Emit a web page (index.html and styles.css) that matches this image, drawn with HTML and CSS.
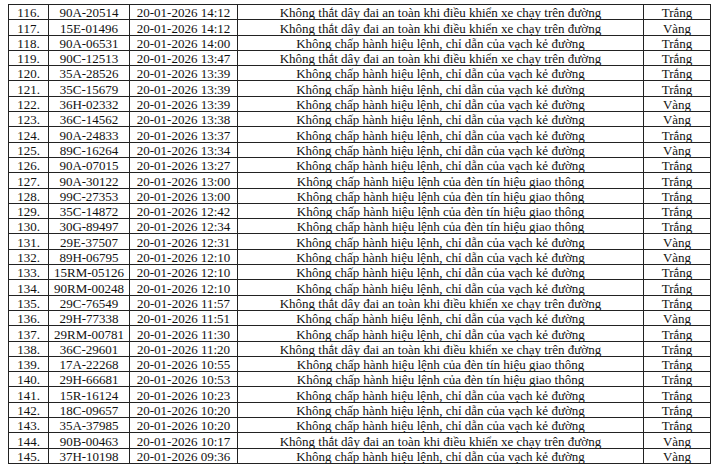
FILE: index.html
```html
<!DOCTYPE html>
<html lang="vi">
<head>
<meta charset="utf-8">
<link rel="stylesheet" href="styles.css">
</head>
<body>
<table class="list">
<colgroup><col class="c-no"><col class="c-plate"><col class="c-time"><col class="c-desc"><col class="c-color"></colgroup>
<tbody>
<tr><td>116.</td><td>90A-20514</td><td>20-01-2026 14:12</td><td>Không thắt dây đai an toàn khi điều khiển xe chạy trên đường</td><td>Trắng</td></tr>
<tr><td>117.</td><td>15E-01496</td><td>20-01-2026 14:12</td><td>Không thắt dây đai an toàn khi điều khiển xe chạy trên đường</td><td>Vàng</td></tr>
<tr><td>118.</td><td>90A-06531</td><td>20-01-2026 14:00</td><td>Không chấp hành hiệu lệnh, chỉ dẫn của vạch kẻ đường</td><td>Trắng</td></tr>
<tr><td>119.</td><td>90C-12513</td><td>20-01-2026 13:47</td><td>Không thắt dây đai an toàn khi điều khiển xe chạy trên đường</td><td>Trắng</td></tr>
<tr><td>120.</td><td>35A-28526</td><td>20-01-2026 13:39</td><td>Không chấp hành hiệu lệnh, chỉ dẫn của vạch kẻ đường</td><td>Trắng</td></tr>
<tr><td>121.</td><td>35C-15679</td><td>20-01-2026 13:39</td><td>Không chấp hành hiệu lệnh, chỉ dẫn của vạch kẻ đường</td><td>Trắng</td></tr>
<tr><td>122.</td><td>36H-02332</td><td>20-01-2026 13:39</td><td>Không chấp hành hiệu lệnh, chỉ dẫn của vạch kẻ đường</td><td>Vàng</td></tr>
<tr><td>123.</td><td>36C-14562</td><td>20-01-2026 13:38</td><td>Không chấp hành hiệu lệnh, chỉ dẫn của vạch kẻ đường</td><td>Vàng</td></tr>
<tr><td>124.</td><td>90A-24833</td><td>20-01-2026 13:37</td><td>Không chấp hành hiệu lệnh, chỉ dẫn của vạch kẻ đường</td><td>Trắng</td></tr>
<tr><td>125.</td><td>89C-16264</td><td>20-01-2026 13:34</td><td>Không chấp hành hiệu lệnh, chỉ dẫn của vạch kẻ đường</td><td>Vàng</td></tr>
<tr><td>126.</td><td>90A-07015</td><td>20-01-2026 13:27</td><td>Không chấp hành hiệu lệnh, chỉ dẫn của vạch kẻ đường</td><td>Trắng</td></tr>
<tr><td>127.</td><td>90A-30122</td><td>20-01-2026 13:00</td><td>Không chấp hành hiệu lệnh của đèn tín hiệu giao thông</td><td>Trắng</td></tr>
<tr><td>128.</td><td>99C-27353</td><td>20-01-2026 13:00</td><td>Không chấp hành hiệu lệnh của đèn tín hiệu giao thông</td><td>Trắng</td></tr>
<tr><td>129.</td><td>35C-14872</td><td>20-01-2026 12:42</td><td>Không chấp hành hiệu lệnh của đèn tín hiệu giao thông</td><td>Trắng</td></tr>
<tr><td>130.</td><td>30G-89497</td><td>20-01-2026 12:34</td><td>Không chấp hành hiệu lệnh của đèn tín hiệu giao thông</td><td>Trắng</td></tr>
<tr><td>131.</td><td>29E-37507</td><td>20-01-2026 12:31</td><td>Không chấp hành hiệu lệnh, chỉ dẫn của vạch kẻ đường</td><td>Vàng</td></tr>
<tr><td>132.</td><td>89H-06795</td><td>20-01-2026 12:10</td><td>Không chấp hành hiệu lệnh, chỉ dẫn của vạch kẻ đường</td><td>Vàng</td></tr>
<tr><td>133.</td><td>15RM-05126</td><td>20-01-2026 12:10</td><td>Không chấp hành hiệu lệnh, chỉ dẫn của vạch kẻ đường</td><td>Trắng</td></tr>
<tr><td>134.</td><td>90RM-00248</td><td>20-01-2026 12:10</td><td>Không chấp hành hiệu lệnh, chỉ dẫn của vạch kẻ đường</td><td>Trắng</td></tr>
<tr><td>135.</td><td>29C-76549</td><td>20-01-2026 11:57</td><td>Không thắt dây đai an toàn khi điều khiển xe chạy trên đường</td><td>Trắng</td></tr>
<tr><td>136.</td><td>29H-77338</td><td>20-01-2026 11:51</td><td>Không chấp hành hiệu lệnh, chỉ dẫn của vạch kẻ đường</td><td>Vàng</td></tr>
<tr><td>137.</td><td>29RM-00781</td><td>20-01-2026 11:30</td><td>Không chấp hành hiệu lệnh, chỉ dẫn của vạch kẻ đường</td><td>Trắng</td></tr>
<tr><td>138.</td><td>36C-29601</td><td>20-01-2026 11:20</td><td>Không thắt dây đai an toàn khi điều khiển xe chạy trên đường</td><td>Trắng</td></tr>
<tr><td>139.</td><td>17A-22268</td><td>20-01-2026 10:55</td><td>Không chấp hành hiệu lệnh của đèn tín hiệu giao thông</td><td>Trắng</td></tr>
<tr><td>140.</td><td>29H-66681</td><td>20-01-2026 10:53</td><td>Không chấp hành hiệu lệnh của đèn tín hiệu giao thông</td><td>Trắng</td></tr>
<tr><td>141.</td><td>15R-16124</td><td>20-01-2026 10:23</td><td>Không chấp hành hiệu lệnh, chỉ dẫn của vạch kẻ đường</td><td>Trắng</td></tr>
<tr><td>142.</td><td>18C-09657</td><td>20-01-2026 10:20</td><td>Không chấp hành hiệu lệnh, chỉ dẫn của vạch kẻ đường</td><td>Trắng</td></tr>
<tr><td>143.</td><td>35A-37985</td><td>20-01-2026 10:20</td><td>Không chấp hành hiệu lệnh, chỉ dẫn của vạch kẻ đường</td><td>Trắng</td></tr>
<tr><td>144.</td><td>90B-00463</td><td>20-01-2026 10:17</td><td>Không thắt dây đai an toàn khi điều khiển xe chạy trên đường</td><td>Vàng</td></tr>
<tr><td>145.</td><td>37H-10198</td><td>20-01-2026 09:36</td><td>Không chấp hành hiệu lệnh, chỉ dẫn của vạch kẻ đường</td><td>Vàng</td></tr>
</tbody>
</table>
</body>
</html>
```

FILE: styles.css
```css
html, body {
  margin: 0;
  padding: 0;
  background: #fff;
}
body {
  padding: 4px 0 0 8px;
}
.list {
  border-collapse: collapse;
  table-layout: fixed;
  width: 702px;
  font-family: "Liberation Serif", "Times New Roman", serif;
  font-size: 13px;
  color: #111;
}
.c-no { width: 40px; }
.c-plate { width: 81px; }
.c-time { width: 108px; }
.c-desc { width: 406px; }
.c-color { width: 67px; }
.list tr {
  height: 15.3px;
}
.list td {
  border: 1px solid #222;
  padding: 0;
  height: 14.3px;
  line-height: 13px;
  text-align: center;
  white-space: nowrap;
  overflow: hidden;
  vertical-align: bottom;
}
```
